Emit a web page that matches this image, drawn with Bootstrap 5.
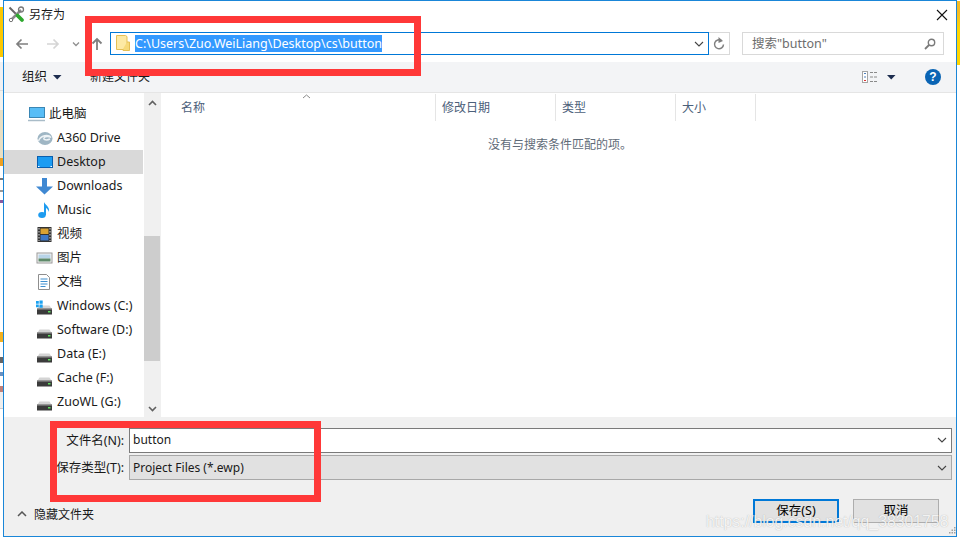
<!DOCTYPE html>
<html lang="zh">
<head>
<meta charset="utf-8">
<title>另存为</title>
<link href="https://cdn.jsdelivr.net/npm/bootstrap@5.3.0/dist/css/bootstrap.min.css" rel="stylesheet">
<style>
html,body{width:960px;height:540px;overflow:hidden;margin:0}
body{background:#fff;font-family:"Noto Sans","Noto Sans CJK SC",sans-serif;font-size:12.5px;color:#1a1a1a;position:relative}
.backdrop{height:540px}
.stripl{width:3px;height:537px;background:linear-gradient(#fff 0 7px,#fcc800 7px 57px,#fff 57px 62px,#f0f1f3 62px 90px,#ddd 90px 91px,#f2f2ee 91px 110px,#e8dfc4 110px 158px,#eea020 158px 166px,#fff 166px 178px,#777 178px 180px,#fff 180px 190px,#999 190px 192px,#fff 192px 200px,#8a5aa0 200px 203px,#fff 203px 332px,#f2b01e 332px 342px,#fff 342px 357px,#666 357px 363px,#fff 363px 372px,#6a90c0 372px 376px,#fff 376px 386px,#c08078 386px 392px,#eee 392px 408px,#ccc 408px 409px,#fff 409px)}
.stripr{width:3px;height:537px;background:linear-gradient(#fff 0 1px,#f7bb22 1px 12px,#ffd500 30px 65px,#fff 65px)}
.dlg{height:537px;border:1px solid #1a86d8;background:#fff;width:954px}
.titlebar{height:27px;padding-left:4px}
.ttl{font-size:12px;margin-left:4px}
.closex{margin-right:7px}
.navrow{height:34px;padding:0 0 3px 11px}
.ic-fwd{margin-left:17px}
.ic-drop{margin-left:12px}
.ic-up{margin-left:11px}
.addr{width:599px;height:23px;border:1px solid #0078d7;margin-left:7px}
.ic-folder{margin-left:5px}
.sel{background:#3399ff;color:#fff;line-height:17px;margin-left:5px;font-size:12.5px}
.refresh{width:21px;height:23px;border:1px solid #d9d9d9;border-left:0}
.searchbox{width:202px;height:23px;border:1px solid #d9d9d9;margin-left:12px;padding:1px 7px 0 9px;color:#6d6d6d;font-size:12.5px}
.tools{height:31px;background:#f3f4f6;border-bottom:1px solid #e5e5e5;padding:0 15px 0 18px}
.ic-tri{margin-left:6px}
.newf{margin-left:28px;font-size:12px}
.ic-help{margin-left:29px}
.content{height:324px}
.side{width:139px;padding-top:9px}
.sideitem{height:24px;padding-left:32px;color:#1a1a1a;white-space:nowrap}
.sideitem.root{padding-left:24px}
.sideitem.on{background:#d9d9d9}
.sideitem svg{width:18px;height:18px;margin-right:3px;flex:none}
.scroll{width:16px;margin-left:1px;background:#f0f0f0;position:relative}
.thumb{height:125px;margin-top:143px;background:#cdcdcd}
.sc-up{position:absolute;left:4px;top:7px}
.sc-dn{position:absolute;left:4px;bottom:5px}
.files{border-left:1px solid #f0f0f0}
.heads{height:28px;color:#4c607a;font-size:12px;position:relative;padding-top:1px}
.hd{height:27px;border-right:1px solid #e5e5e5;padding-left:6px;display:flex;align-items:center}
.hd-name{width:275px;padding-left:20px}
.hd-date{width:120px}
.hd-type{width:120px}
.hd-size{width:80px}
.sortup{position:absolute;left:141px;top:1px}
.empty{text-align:center;font-size:12px;color:#5f6b78;margin-top:15px;padding-left:3px}
.panel{flex:1;background:#f0f0f0;position:relative}
.fields{padding-top:11px}
.frow{height:27px;padding-right:4px}
.flabel{width:125px;text-align:right;padding-right:5px;white-space:nowrap;font-size:12.5px;line-height:25px}
.finput{flex:1;height:25px;border:1px solid #7a7a7a;background:#fff;padding:0 4px 1px 3px;font-size:12px}
.fselect{flex:1;height:25px;border:1px solid #a8a8a8;background:#e1e1e1;padding:0 4px 0 3px;font-size:12px}
.foot{padding:5px 17px 0 13px;margin-top:12px}
.hidetxt{margin-left:7px;font-size:12px;margin-top:7px}
.ic-hide{margin-top:12px}
.wbtn{width:86px;height:24px;border:1px solid #adadad;background:#e1e1e1;font-size:12.5px;padding:0;color:#000;border-radius:0}
.wbtn.pri{border:2px solid #0078d7;margin-right:14px}
.redbox{position:absolute;border:7px solid #ff3838;pointer-events:none}
.red1{left:85px;top:16px;width:336px;height:60px}
.red2{left:50px;top:421px;width:271px;height:81px}
.mark-wm{position:absolute;left:706px;top:513px;color:rgba(255,255,255,.85);font:15.8px "Liberation Sans",sans-serif;text-shadow:0 0 1px rgba(110,110,110,.5);white-space:nowrap}
.grip{position:absolute;left:949px;top:526px}
</style>
</head>
<body>
<svg width="0" height="0" class="position-absolute">
<defs>
<symbol id="drive" viewBox="0 0 18 18"><path d="M1.500 11.500 3.500 8.500h10l2 3z" fill="#d4d4d4"/><rect x="1" y="11.500" width="15" height="6" fill="#3b3b3b"/><rect x="1" y="11.500" width="15" height="1" fill="#9a9a9a"/><rect x="12" y="14" width="2.500" height="1.500" fill="#5fe05f"/></symbol>
<symbol id="chev" viewBox="0 0 10 6"><path d="M1 1l4 4 4-4" fill="none" stroke="#444" stroke-width="1.100"/></symbol>
<symbol id="tri" viewBox="0 0 9 5"><path d="M0 0h8.500L4.250 4.500z" fill="#1d2d4f"/></symbol>
</defs>
</svg>
<div class="backdrop d-flex">
<div class="stripl"></div>
<div class="dlg d-flex flex-column">
 <div class="titlebar d-flex align-items-center">
  <svg width="17" height="17" viewBox="0 0 17 17"><path d="M1.500 1.500 14 14" stroke="#666" stroke-width="2"/><path d="M13 4 3 14" stroke="#8a8a8a" stroke-width="2.500"/><path d="M9.500 9.500l4.500 4.500" stroke="#2da82d" stroke-width="3.800" stroke-linecap="round"/><circle cx="13" cy="3.500" r="2.500" fill="none" stroke="#777" stroke-width="1.300"/><circle cx="3" cy="14" r="1.700" fill="#fff" stroke="#777"/></svg>
  <span class="ttl">另存为</span>
  <svg class="ms-auto closex" width="14" height="14" viewBox="0 0 14 14"><path d="M2 2l10 10M12 2 2 12" stroke="#111" stroke-width="1.100"/></svg>
 </div>
 <div class="navrow d-flex align-items-center">
  <svg width="14" height="12" viewBox="0 0 14 12"><path d="M13 6H2M6.500 1.500 2 6l4.500 4.500" fill="none" stroke="#7f7f7f" stroke-width="1.700"/></svg>
  <svg class="ic-fwd" width="14" height="12" viewBox="0 0 14 12"><path d="M1 6h11M7.500 1.500 12 6l-4.500 4.500" fill="none" stroke="#d5d5d5" stroke-width="1.700"/></svg>
  <svg class="ic-drop" width="8" height="6" viewBox="0 0 8 6"><path d="M1 1.500 4 4.500l3-3" fill="none" stroke="#8f8f8f" stroke-width="1.300"/></svg>
  <svg class="ic-up" width="12" height="14" viewBox="0 0 12 14"><path d="M6 13V2M1.500 6.500 6 2l4.500 4.500" fill="none" stroke="#7f7f7f" stroke-width="1.800"/></svg>
  <div class="addr d-flex align-items-center">
   <svg class="ic-folder" width="14" height="17" viewBox="0 0 14 17"><path d="M.5.500h9l1.500 1v13H.5z" fill="#fde9a4" stroke="#e5bf55"/><path d="M11 7h2.500v8.500H7V14" fill="#f6d979" stroke="#e5bf55"/></svg>
   <span class="sel">C:\Users\Zuo.WeiLiang\Desktop\cs\button</span>
   <svg class="ms-auto me-1" width="10" height="6"><use href="#chev"/></svg>
  </div>
  <div class="refresh d-flex align-items-center justify-content-center">
   <svg width="12" height="13" viewBox="0 0 12 13"><path d="M8.500 3.500A4.500 4.500 0 1 0 10.500 7.500" fill="none" stroke="#7f7f7f" stroke-width="1.500"/><path d="M5.500 0v6l4.500-2z" fill="#7f7f7f"/></svg>
  </div>
  <div class="searchbox d-flex align-items-center justify-content-between">
   <span>搜索"button"</span>
   <svg width="12" height="12" viewBox="0 0 12 12"><circle cx="7.500" cy="4.500" r="3.200" fill="none" stroke="#7a7a7a" stroke-width="1.400"/><path d="M5 7 1 11" stroke="#7a7a7a" stroke-width="1.800"/></svg>
  </div>
 </div>
 <div class="tools d-flex align-items-center">
  <span>组织</span>
  <svg class="ic-tri" width="9" height="5"><use href="#tri"/></svg>
  <span class="newf">新建文件夹</span>
  <svg class="ms-auto" width="17" height="12" viewBox="0 0 17 12"><rect x=".5" y=".5" width="5" height="11" fill="#fff" stroke="#a5a5a5"/><path d="M2 2.500h2M2 6h2" stroke="#4f81bd"/><path d="M2 9.500h2" stroke="#d33"/><path d="M8 1.500h8M8 6h8M8 10.500h8" stroke="#8a8a8a" stroke-dasharray="3 1"/></svg>
  <svg class="ms-2" width="9" height="5"><use href="#tri"/></svg>
  <svg class="ic-help" width="16" height="16" viewBox="0 0 16 16"><circle cx="8" cy="8" r="8" fill="#0a64b4"/><text x="8" y="12" text-anchor="middle" fill="#fff" font-family="Liberation Sans" font-weight="700" font-size="12">?</text></svg>
 </div>
 <div class="content d-flex">
  <div class="side">
   <div class="sideitem root d-flex align-items-center"><svg viewBox="0 0 18 18"><rect x="1.500" y="2.500" width="15" height="10" fill="#58bdf6" stroke="#3a86b4"/><path d="M0 15.500h17" stroke="#a9bcc8" stroke-width="1.500"/></svg>此电脑</div>
   <div class="sideitem d-flex align-items-center"><svg viewBox="0 0 18 18"><ellipse cx="9" cy="9.500" rx="7.500" ry="6.500" fill="#9fb6c4"/><path d="M2.500 12c2-6 10-7 12.500-3.500-2-1.500-6-1.500-7 .5s3 2.500 6 1" fill="none" stroke="#eef3f6" stroke-width="1.500"/></svg>A360 Drive</div>
   <div class="sideitem on d-flex align-items-center"><svg viewBox="0 0 18 18"><rect x="1.500" y="3.500" width="15" height="11" fill="#1b9cf2" stroke="#0a5fae"/><path d="M2 13.500h1.500M14.500 13.500H16" stroke="#fff"/></svg>Desktop</div>
   <div class="sideitem d-flex align-items-center"><svg viewBox="0 0 18 18"><path d="M6 1h5v8.500h6L8.500 17.500 0 9.500h6z" fill="#3f88d2"/></svg>Downloads</div>
   <div class="sideitem d-flex align-items-center"><svg viewBox="0 0 18 18"><ellipse cx="6" cy="14" rx="3.800" ry="3" fill="#1e9cf0"/><path d="M8 14V1c1 3 6 4.500 5 10-.7-2-2-3.500-3-4V14z" fill="#1e9cf0"/></svg>Music</div>
   <div class="sideitem d-flex align-items-center"><svg viewBox="0 0 18 18"><rect x="1.500" y="2" width="14" height="15" fill="#333"/><rect x="4.500" y="3.500" width="8" height="5.500" fill="#d9a233"/><rect x="4.500" y="10" width="8" height="5.500" fill="#3c78c8"/><path d="M3 3v13M14 3v13" stroke="#ddd" stroke-dasharray="1.500 1.500"/></svg>视频</div>
   <div class="sideitem d-flex align-items-center"><svg viewBox="0 0 18 18"><rect x="1" y="4" width="15" height="10" fill="#f4f4f4" stroke="#9a9a9a"/><rect x="2.500" y="5.500" width="12" height="4" fill="#b8d4e8"/><rect x="2.500" y="9.500" width="12" height="3" fill="#5f8a6a"/></svg>图片</div>
   <div class="sideitem d-flex align-items-center"><svg viewBox="0 0 18 18"><path d="M2.500 1.500h8l3 3v12h-11z" fill="#fff" stroke="#8e8e8e"/><path d="M4.500 6h7M4.500 8.500h7M4.500 11h7M4.500 13.500h5" stroke="#3f8fcf"/></svg>文档</div>
   <div class="sideitem d-flex align-items-center"><svg viewBox="0 0 18 18"><use href="#drive"/><path d="M0 4h2.800v2.800H0zM3.500 3.500h3.200v3.300H3.500zM0 7.500h2.800v2.800H0zM3.500 7.500h3.200v3.200H3.500z" fill="#1ba1f0"/></svg>Windows (C:)</div>
   <div class="sideitem d-flex align-items-center"><svg viewBox="0 0 18 18"><use href="#drive"/></svg>Software (D:)</div>
   <div class="sideitem d-flex align-items-center"><svg viewBox="0 0 18 18"><use href="#drive"/></svg>Data (E:)</div>
   <div class="sideitem d-flex align-items-center"><svg viewBox="0 0 18 18"><use href="#drive"/></svg>Cache (F:)</div>
   <div class="sideitem d-flex align-items-center"><svg viewBox="0 0 18 18"><use href="#drive"/></svg>ZuoWL (G:)</div>
  </div>
  <div class="scroll d-flex flex-column">
   <svg class="sc-up" width="9" height="6" viewBox="0 0 9 6"><path d="M1 5l3.500-3.500L8 5" fill="none" stroke="#606060" stroke-width="1.600"/></svg>
   <div class="thumb"></div>
   <svg class="sc-dn" width="9" height="6" viewBox="0 0 9 6"><path d="M1 1l3.500 3.500L8 1" fill="none" stroke="#606060" stroke-width="1.600"/></svg>
  </div>
  <div class="files flex-grow-1">
   <div class="heads d-flex">
    <div class="hd hd-name">名称</div>
    <div class="hd hd-date">修改日期</div>
    <div class="hd hd-type">类型</div>
    <div class="hd hd-size">大小</div>
    <svg class="sortup" width="9" height="5" viewBox="0 0 9 5"><path d="M1 4l3.500-3L8 4" fill="none" stroke="#8a8a8a"/></svg>
   </div>
   <div class="empty">没有与搜索条件匹配的项。</div>
  </div>
 </div>
 <div class="panel">
  <div class="fields">
   <div class="frow d-flex"><div class="flabel">文件名(N):</div><div class="finput d-flex align-items-center justify-content-between"><span>button</span><svg width="10" height="6"><use href="#chev"/></svg></div></div>
   <div class="frow d-flex"><div class="flabel">保存类型(T):</div><div class="fselect d-flex align-items-center justify-content-between"><span>Project Files (*.ewp)</span><svg width="10" height="6"><use href="#chev"/></svg></div></div>
  </div>
  <div class="foot d-flex align-items-start">
   <svg class="ic-hide" width="10" height="6" viewBox="0 0 10 6"><path d="M1 5l4-4 4 4" fill="none" stroke="#555" stroke-width="1.500"/></svg>
   <span class="hidetxt">隐藏文件夹</span>
   <button class="btn wbtn pri ms-auto" type="button">保存(S)</button>
   <button class="btn wbtn" type="button">取消</button>
  </div>
 </div>
</div>
<div class="stripr"></div>
</div>
<div class="redbox red1"></div>
<div class="redbox red2"></div>
<div class="mark-wm">https://blog.csdn.net/qq_38301758</div>
<svg class="grip" width="8" height="9" viewBox="0 0 8 9"><path d="M5 1h1.500v1.500H5zM2.500 3.500H4V5H2.500zM5 3.500h1.500V5H5zM0 6h1.500v1.500H0zM2.500 6H4v1.500H2.500zM5 6h1.500v1.500H5z" fill="#a0a0a0"/></svg>
<script src="https://cdn.jsdelivr.net/npm/bootstrap@5.3.0/dist/js/bootstrap.bundle.min.js"></script>
</body>
</html>
